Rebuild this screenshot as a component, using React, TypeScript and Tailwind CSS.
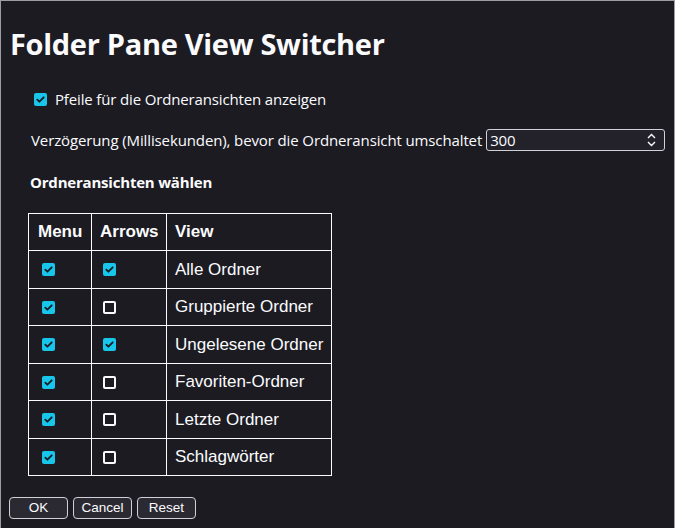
import React from "react";

const Checked = () => (
  <span className="inline-flex w-[13px] h-[13px] rounded-[2px] bg-[#17c6ea] items-center justify-center shrink-0">
    <svg width="11" height="11" viewBox="0 0 11 11">
      <path d="M2.3 5.6 L4.4 7.7 L8.7 3.3" fill="none" stroke="#1c1b22" strokeWidth="1.8" strokeLinecap="round" strokeLinejoin="round" />
    </svg>
  </span>
);

const Unchecked = () => (
  <span className="inline-block w-[13px] h-[13px] rounded-[2px] border-2 border-[#fbfbfe] bg-[#1c1b22] shrink-0" />
);

const rows: { name: string; menu: boolean; arrows: boolean; h: string }[] = [
  { name: "Alle Ordner", menu: true, arrows: true, h: "h-[38px]" },
  { name: "Gruppierte Ordner", menu: true, arrows: false, h: "h-[37px]" },
  { name: "Ungelesene Ordner", menu: true, arrows: true, h: "h-[38px]" },
  { name: "Favoriten-Ordner", menu: true, arrows: false, h: "h-[37px]" },
  { name: "Letzte Ordner", menu: true, arrows: false, h: "h-[38px]" },
  { name: "Schlagwörter", menu: true, arrows: false, h: "h-[37px]" },
];

export default function App() {
  return (
    <div className="min-h-[528px] bg-[#1c1b22] border-t border-x border-[#9c9ca4] text-[#fbfbfe] font-['Open_Sans','Noto_Sans',sans-serif]">
      <div className="pl-2 pt-[21px]">
        <h1 className="h-[44px] flex items-center text-[29px] font-bold tracking-[-0.3px] pl-[1px]">
          Folder Pane View Switcher
        </h1>
        <div className="mt-[21px] h-[24px] flex items-center pl-[25px] gap-[8px] text-[15px] tracking-[-0.15px]">
          <Checked />
          <span>Pfeile für die Ordneransichten anzeigen</span>
        </div>
        <div className="mt-[17px] h-[24px] flex items-center pl-[22px] text-[15px] tracking-[-0.12px]">
          <span>Verzögerung (Millisekunden), bevor die Ordneransicht umschaltet</span>
          <div className="ml-[4px] w-[179px] h-[22px] border border-[#d0d0d7] rounded-[3px] bg-[#23222b] flex items-center pl-[3px] pr-[8px]">
            <span className="flex-1 text-[15px]">300</span>
            <svg width="9" height="14" viewBox="0 0 9 14">
              <path d="M1 5 L4.5 1.5 L8 5 M1 9 L4.5 12.5 L8 9" fill="none" stroke="#fbfbfe" strokeWidth="1.4" />
            </svg>
          </div>
        </div>
        <div className="mt-[18px] h-[24px] flex items-center pl-[21px] text-[15px] font-bold tracking-[-0.2px]">
          Ordneransichten wählen
        </div>
        <div className="mt-[19px] pl-[19px]">
          <table className="border-collapse font-['Liberation_Sans',Arial,sans-serif] text-[17px]">
            <thead>
              <tr className="h-[37px]">
                <th className="w-[63px] border border-[#fbfbfe] text-left font-bold pl-[9px]">Menu</th>
                <th className="w-[75px] border border-[#fbfbfe] text-left font-bold pl-[8px]">Arrows</th>
                <th className="w-[165px] border border-[#fbfbfe] text-left font-bold pl-[8px]">View</th>
              </tr>
            </thead>
            <tbody>
              {rows.map((r) => (
                <tr key={r.name} className={r.h}>
                  <td className="border border-[#fbfbfe] pl-[13px] align-middle">
                    <div className="flex items-center">{r.menu ? <Checked /> : <Unchecked />}</div>
                  </td>
                  <td className="border border-[#fbfbfe] pl-[11px] align-middle">
                    <div className="flex items-center">{r.arrows ? <Checked /> : <Unchecked />}</div>
                  </td>
                  <td className="border border-[#fbfbfe] pl-[8px] align-middle">{r.name}</td>
                </tr>
              ))}
            </tbody>
          </table>
        </div>
        <div className="mt-[21px] flex gap-[5px] font-['Liberation_Sans',Arial,sans-serif] text-[13.5px]">
          {["OK", "Cancel", "Reset"].map((b) => (
            <button key={b} className="w-[59px] h-[22px] border border-[#d0d0d7] rounded-[4px] bg-[#2b2a33] text-[#fbfbfe] flex items-center justify-center">
              {b}
            </button>
          ))}
        </div>
      </div>
    </div>
  );
}
